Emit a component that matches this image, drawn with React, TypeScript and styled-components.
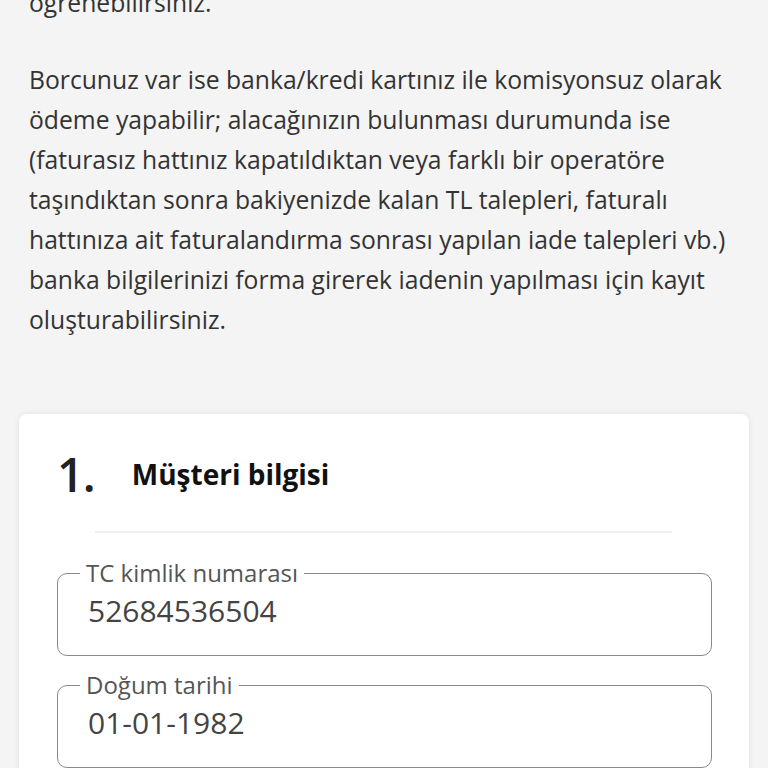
import styled, { createGlobalStyle } from 'styled-components'

const GlobalStyle = createGlobalStyle`
  html, body {
    margin: 0;
    padding: 0;
    background: #f4f4f4;
  }
  body {
    font-family: "Open Sans", "Liberation Sans", sans-serif;
    color: #333;
    height: 768px;
    overflow: hidden;
  }
`

const Page = styled.main`
  padding: 0 19px;
`

const Intro = styled.section`
  padding: 0 10px;
`

const Paragraph = styled.p<{ $cut?: boolean }>`
  margin: ${(p) => (p.$cut ? '-17px 0 37px' : '0')};
  font-size: 24.7px;
  line-height: 40px;
  color: #333;
`

const Card = styled.section`
  margin-top: 74px;
  background: #fff;
  border-radius: 8px;
  box-shadow: 0 0 6px rgba(0, 0, 0, 0.08);
  padding: 30px 37px 60px 38px;
`

const StepHeader = styled.header`
  display: flex;
  align-items: center;
  gap: 37px;
  height: 60px;
`

const StepNumber = styled.span`
  font-size: 47px;
  font-weight: 600;
  color: #222;
  letter-spacing: -1px;
`

const StepTitle = styled.h2`
  margin: 0;
  font-size: 28px;
  font-weight: 700;
  color: #111;
`

const Divider = styled.hr`
  border: 0;
  height: 2px;
  background: #f0f0f0;
  margin: 27px 40px 26px 38px;
`

const Fields = styled.div`
  display: flex;
  flex-direction: column;
  gap: 15px;
`

const Field = styled.fieldset`
  margin: 0;
  padding: 0 30px 0 30px;
  border: 1.5px solid #8a8a8a;
  border-radius: 10px;
  height: 97px;
  box-sizing: border-box;
`

const Legend = styled.legend`
  margin-left: -8px;
  padding: 0 6px;
  font-size: 24px;
  line-height: 28px;
  color: #555;
`

const Value = styled.div`
  font-size: 30px;
  line-height: 36px;
  color: #444;
  margin-top: 6px;
`

const fields = [
  { label: 'TC kimlik numarası', value: '52684536504' },
  { label: 'Doğum tarihi', value: '01-01-1982' },
]

export default function App() {
  return (
    <>
      <GlobalStyle />
      <Page>
        <Intro>
          <Paragraph $cut>öğrenebilirsiniz.</Paragraph>
          <Paragraph>
            Borcunuz var ise banka/kredi kartınız ile komisyonsuz olarak ödeme
            yapabilir; alacağınızın bulunması durumunda ise (faturasız hattınız
            kapatıldıktan veya farklı bir operatöre taşındıktan sonra
            bakiyenizde kalan TL talepleri, faturalı hattınıza ait
            faturalandırma sonrası yapılan iade talepleri vb.) banka
            bilgilerinizi forma girerek iadenin yapılması için kayıt
            oluşturabilirsiniz.
          </Paragraph>
        </Intro>
        <Card>
          <StepHeader>
            <StepNumber>1.</StepNumber>
            <StepTitle>Müşteri bilgisi</StepTitle>
          </StepHeader>
          <Divider />
          <Fields>
            {fields.map((f) => (
              <Field key={f.label}>
                <Legend>{f.label}</Legend>
                <Value>{f.value}</Value>
              </Field>
            ))}
          </Fields>
        </Card>
      </Page>
    </>
  )
}
